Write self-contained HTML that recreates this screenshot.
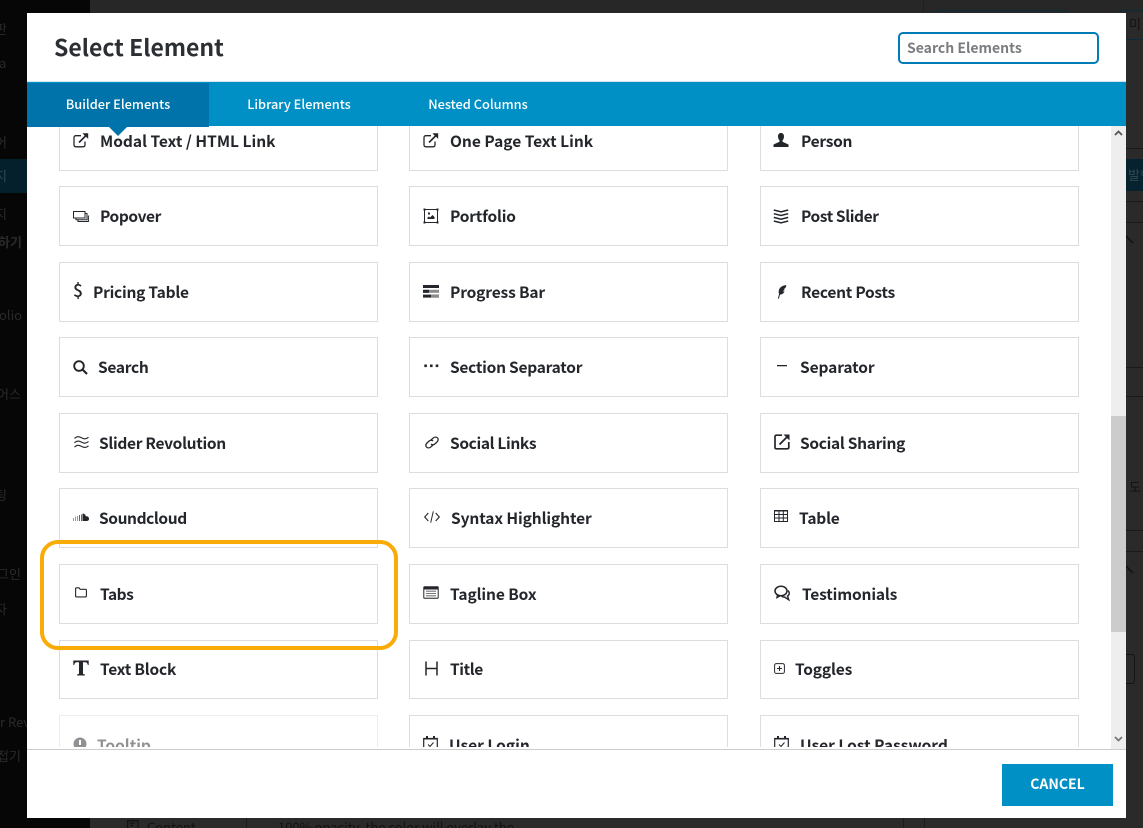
<!DOCTYPE html>
<html lang="en"><head><meta charset="utf-8"><title>Select Element</title>
<style>
*{box-sizing:border-box}
html,body{margin:0;padding:0;width:1143px;height:828px;overflow:hidden;background:#2a2a2a}
body{position:relative;font-family:"Noto Sans CJK KR","Liberation Sans",sans-serif;color:#23282d}
.a{position:absolute;white-space:nowrap}
.side{left:0;top:0;width:90px;height:828px;background:#060606}
.d{color:#2a2a2a;font-size:13px;line-height:18px}
.modal{left:27px;top:13px;width:1099px;height:805px;background:#fff}
.title{left:27px;top:15px;font-size:23px;line-height:36px;font-weight:700;color:#2b2f33}
.search{left:871px;top:19px;width:201px;height:32px;border:2px solid #007cb6;border-radius:5px;font-size:14px;font-weight:700;color:#7a7d80;line-height:29px;padding-left:7px}
.bar{left:0;top:68px;width:1099px;height:45px;background:#0190c6;border-top:1px solid #d5e6ee}
.tab{top:1px;height:44px;color:#fff;font-size:12.8px;line-height:41px;font-weight:500;text-align:center}
.list{left:0;top:113px;width:1084px;height:621px;overflow:hidden}
.c{position:absolute;width:319px;height:60px;border:1px solid #ddd;background:#fff}
.l{position:absolute;font-size:15.5px;font-weight:700;line-height:20px;color:#23262b;white-space:nowrap}
svg{position:absolute;overflow:visible;stroke-width:1.3}
.s{fill:none;stroke:#23262b}
.f{fill:#23262b}
.scroll{left:1084px;top:113px;width:15px;height:623px;background:#eee}
.thumb{left:0;top:290px;width:15px;height:216px;background:#ccc}
.foot{left:0;top:736px;width:1099px;height:69px;background:#fff;border-top:1px solid #ccc}
.btn{left:975px;top:14px;width:111px;height:42px;background:#0190c6;color:#fff;font-weight:700;font-size:14px;line-height:41px;text-align:center}
.ring{left:40px;top:540px;width:358px;height:110px;border:4px solid #f9ab07;border-radius:18px}
.ln{position:absolute;left:1126px;width:17px;height:1px;background:#1a1a1a}
</style></head><body>
<div class="a side"></div>
<div class="a" style="left:90px;top:0;width:1053px;height:13px;background:#272727"></div>
<div class="a" style="left:923px;top:0;width:1px;height:13px;background:#1f1f1f"></div>
<div class="a" style="left:934px;top:10px;width:133px;height:3px;border:1px solid #0b2a3a;border-bottom:0;border-radius:3px 3px 0 0"></div>
<div class="a" style="left:1118px;top:10px;width:25px;height:30px;border:1px solid #0b2a3a;border-right:0;border-radius:3px 0 0 3px"></div>
<div class="a" style="left:1126px;top:159px;width:17px;height:32px;background:#06222f"></div>
<div class="ln" style="top:148px"></div><div class="ln" style="top:201px"></div><div class="ln" style="top:222px"></div>
<div class="ln" style="top:367px"></div><div class="ln" style="top:396px"></div><div class="ln" style="top:530px"></div><div class="ln" style="top:551px"></div>
<svg style="left:1126px;top:236px" width="12" height="8" viewBox="0 0 12 8"><path fill="none" stroke="#111" stroke-width="1.500" d="M0 0 7 7"/></svg>
<svg style="left:1126px;top:566px" width="12" height="8" viewBox="0 0 12 8"><path fill="none" stroke="#111" stroke-width="1.500" d="M0 0 7 7"/></svg>
<div class="a" style="left:1126px;top:654px;width:9px;height:30px;border:1px solid #141414;border-left:0;border-radius:0 3px 3px 0"></div>
<div class="a" style="left:0;top:159px;width:27px;height:34px;background:#04202c"></div>
<div class="a d" style="left:-5px;top:20px">판</div>
<div class="a d" style="left:-1px;top:54px">a</div>
<div class="a d" style="left:-5px;top:133px">어</div>
<div class="a d" style="left:-5px;top:167px;color:#33474f">지</div>
<div class="a d" style="left:-5px;top:205px">지</div>
<div class="a d" style="left:-2px;top:233px;font-weight:700">하기</div>
<div class="a d" style="left:-1px;top:306px">olio</div>
<div class="a d" style="left:-3px;top:385px">어스</div>
<div class="a d" style="left:-5px;top:486px">팅</div>
<div class="a d" style="left:-3px;top:565px">그인</div>
<div class="a d" style="left:-5px;top:600px">자</div>
<div class="a d" style="left:0;top:713px">r Rev</div>
<div class="a d" style="left:-3px;top:747px">접기</div>
<div class="a d" style="left:1129px;top:15px;color:#111">미</div>
<div class="a d" style="left:1128px;top:166px;color:#33474f">발행</div>
<div class="a d" style="left:1129px;top:478px;color:#111">도</div>
<svg style="left:127px;top:820px" width="12" height="8" viewBox="0 0 12 8"><path fill="none" stroke="#111" stroke-width="1.200" d="M.6 8V.6H11V8M3 3H8M3 5.500H6"/></svg>
<div class="a d" style="left:147px;top:818px;color:#111;font-weight:400">Content</div>
<div class="a d" style="left:278px;top:818px;color:#111">100% opacity, the color will overlay the</div>
<div class="a" style="left:246px;top:818px;width:1px;height:10px;background:#1b1b1b"></div>
<div class="a" style="left:903px;top:818px;width:1px;height:10px;background:#1b1b1b"></div>
<div class="a" style="left:924px;top:818px;width:1px;height:10px;background:#1b1b1b"></div>

<div class="a modal">
 <div class="a title">Select Element</div>
 <div class="a search">Search Elements</div>

 <div class="a list">
  <!-- row 1 -->
  <div class="c" style="left:32px;top:-16px;height:61px"></div><div class="c" style="left:382px;top:-16px;height:61px"></div><div class="c" style="left:733px;top:-16px;height:61px"></div>
  <div class="l" style="left:73px;top:5px">Modal Text / HTML Link</div><div class="l" style="left:423px;top:5px">One Page Text Link</div><div class="l" style="left:774px;top:5px;letter-spacing:-.3px">Person</div>
  <svg style="left:46px;top:7px" width="16" height="15" viewBox="0 0 16 15"><path class="s" d="M8 2.700H3Q1 2.700 1 4.700V11.800Q1 13.800 3 13.800H10Q12 13.800 12 11.800V8.500"/><path class="s" stroke-width="1.600" d="M6 9.500 14 1.500"/><path class="f" d="M9.500.2H15.200V5.900L13.300 4 11 2Z"/></svg>
  <svg style="left:396px;top:7px" width="16" height="15" viewBox="0 0 16 15"><path class="s" d="M8 2.700H3Q1 2.700 1 4.700V11.800Q1 13.800 3 13.800H10Q12 13.800 12 11.800V8.500"/><path class="s" stroke-width="1.600" d="M6 9.500 14 1.500"/><path class="f" d="M9.500.2H15.200V5.900L13.300 4 11 2Z"/></svg>
  <svg style="left:746px;top:7px" width="16" height="14" viewBox="0 0 16 14"><path class="f" d="M5 3.500C5 1.300 6.200 0 8 0S11 1.300 11 3.500C11 5.500 10 6.800 9.500 7.500V8.800L15.500 11.500V14H.5V11.500L6.500 8.800V7.500C6 6.800 5 5.500 5 3.500Z"/></svg>
  <!-- row 2 -->
  <div class="c" style="left:32px;top:60px"></div><div class="c" style="left:382px;top:60px"></div><div class="c" style="left:733px;top:60px"></div>
  <div class="l" style="left:73px;top:80px;letter-spacing:-.4px">Popover</div><div class="l" style="left:423px;top:80px;letter-spacing:-.2px">Portfolio</div><div class="l" style="left:774px;top:80px;letter-spacing:-.4px">Post Slider</div>
  <svg style="left:46px;top:85px" width="16" height="12" viewBox="0 0 16 12"><rect class="s" x=".5" y=".5" width="11.500" height="6.500" stroke-width="1"/><path class="s" stroke="#444" stroke-width="1" d="M12.500 2.500H14V8.700H3V7.500M15.400 4.500V10.500H5V9"/></svg>
  <svg style="left:396px;top:82px" width="16" height="16" viewBox="0 0 16 16"><rect class="s" x="1.500" y="1.500" width="13" height="13" stroke-width="1"/><g class="f"><rect x=".5" y=".5" width="2" height="2"/><rect x="13.500" y=".5" width="2" height="2"/><rect x=".5" y="13.500" width="2" height="2"/><rect x="13.500" y="13.500" width="2" height="2"/><rect x="5" y="4.500" width="2" height="2"/><path d="M4.500 11V9.500L6 8.500 7 9.500 9.500 7 11.500 9V11Z"/></g></svg>
  <svg style="left:746px;top:83px" width="16" height="15" viewBox="0 0 16 15"><path class="s" stroke-width="1.500" d="M.8 1 8 2.800 15.200 1M.8 4.700 8 6.500 15.200 4.700M.8 8.400 8 10.200 15.200 8.400M.8 12 8 13.800 15.200 12"/></svg>
  <!-- row 3 -->
  <div class="c" style="left:32px;top:136px"></div><div class="c" style="left:382px;top:136px"></div><div class="c" style="left:733px;top:136px"></div>
  <div class="l" style="left:66px;top:156px;letter-spacing:-.25px">Pricing Table</div><div class="l" style="left:423px;top:156px;letter-spacing:-.15px">Progress Bar</div><div class="l" style="left:774px;top:156px;letter-spacing:-.25px">Recent Posts</div>
  <div class="l" style="left:46px;top:155px;font-size:17.500px;font-weight:500">$</div>
  <svg style="left:396px;top:159px" width="16" height="13" viewBox="0 0 16 13"><rect class="f" width="16" height="3"/><rect y="4.800" width="16" height="3" fill="#8b8b8b"/><rect y="4.800" width="6" height="3" fill="#23262b"/><rect y="9.600" width="16" height="3" class="f"/><rect x="8" y="9.600" width="8" height="3" fill="#8b8b8b"/></svg>
  <svg style="left:749px;top:159px" width="11" height="14" viewBox="0 0 12 16"><path class="f" d="M11.500 0C8 .5 4 2 3 6 2.500 8 3 9.500 3.200 10.500L1.800 15.500H3L4.300 11C7 11 9 9 9.500 7L7 7.500 10 5 8.500 5 11 2.500Z"/></svg>
  <!-- row 4 -->
  <div class="c" style="left:32px;top:211px"></div><div class="c" style="left:382px;top:211px"></div><div class="c" style="left:733px;top:211px"></div>
  <div class="l" style="left:71px;top:231px;letter-spacing:-.3px">Search</div><div class="l" style="left:423px;top:231px;letter-spacing:-.25px">Section Separator</div><div class="l" style="left:773px;top:231px;letter-spacing:-.1px">Separator</div>
  <svg style="left:46px;top:234px" width="15" height="15" viewBox="0 0 15 15"><circle class="s" cx="6" cy="6" r="4.800" stroke-width="1.900"/><path class="s" stroke-width="2.200" d="M9.500 9.500 14 14"/></svg>
  <svg style="left:397px;top:238px" width="15" height="4" viewBox="0 0 15 4"><g class="f"><rect x=".3" y=".5" width="2.600" height="2.600"/><rect x="6" y=".5" width="2.600" height="2.600"/><rect x="11.700" y=".5" width="2.600" height="2.600"/></g></svg>
  <svg style="left:750px;top:239px" width="10" height="2" viewBox="0 0 10 2"><rect class="f" width="10" height="1.300"/></svg>
  <!-- row 5 -->
  <div class="c" style="left:32px;top:287px"></div><div class="c" style="left:382px;top:287px"></div><div class="c" style="left:733px;top:287px"></div>
  <div class="l" style="left:72px;top:307px;letter-spacing:-.3px">Slider Revolution</div><div class="l" style="left:423px;top:307px;letter-spacing:-.35px">Social Links</div><div class="l" style="left:773px;top:307px;letter-spacing:-.3px">Social Sharing</div>
  <svg style="left:47px;top:310px" width="15" height="13" viewBox="0 0 15 13"><path class="s" stroke-width="1.100" d="M.5 2.500C3 0 5 .5 7.500 1.800S12 3.500 14.500 1.200M.5 6.800C3 4.300 5 4.800 7.500 6.100S12 7.800 14.500 5.500M.5 11.100C3 8.600 5 9.100 7.500 10.400S12 12.100 14.500 9.800"/></svg>
  <svg style="left:398px;top:310px" width="14" height="13" viewBox="0 0 14 13"><path class="s" d="M6 4 8 2.200C9.500.8 11.300.8 12.400 1.800S13.500 4.500 12 6L9.800 8C8.500 9 7 9 6 8"/><path class="s" d="M8 9 6 10.800C4.500 12.200 2.700 12.200 1.600 11.200S.5 8.500 2 7L4.200 5C5.500 4 7 4 8 5"/></svg>
  <svg style="left:747px;top:308px" width="16" height="16" viewBox="0 0 16 16"><path class="s" stroke-width="1.700" d="M8 1.200H2.500Q1 1.200 1 2.700V13.300Q1 14.800 2.500 14.800H13.300Q14.800 14.800 14.800 13.300V8"/><path class="s" stroke-width="1.800" d="M5.500 10.500 13.500 2.500"/><path class="f" d="M9.500.5H15.500V6.500L13.500 4.500 11.500 2.500Z"/></svg>
  <!-- row 6 -->
  <div class="c" style="left:32px;top:362px"></div><div class="c" style="left:382px;top:362px"></div><div class="c" style="left:733px;top:362px"></div>
  <div class="l" style="left:72px;top:382px;letter-spacing:-.4px">Soundcloud</div><div class="l" style="left:424px;top:382px;letter-spacing:-.1px">Syntax Highlighter</div><div class="l" style="left:772px;top:382px;letter-spacing:-.2px">Table</div>
  <svg style="left:46px;top:387px" width="16" height="9" viewBox="0 0 16 9"><path fill="#9a9a9a" d="M0 5H1V8H0ZM2 3.500H3V8H2ZM4 3H5V8H4Z"/><path fill="#666" d="M6 2H7V8H6ZM8 1.500H9V8H8Z"/><path class="f" d="M9.500 .7C11 .2 12.500 1.500 12.800 3.300 14.500 3 16 4 16 5.700S14.800 8 13.500 8H9.500Z"/></svg>
  <svg style="left:397px;top:385px" width="16" height="12" viewBox="0 0 16 12"><path class="s" stroke-width="1.100" d="M4.300 2 .7 6 4.300 10M11.700 2 15.300 6 11.700 10"/><path class="s" stroke-width="1" d="M9.300.3 6.700 11.700"/></svg>
  <svg style="left:747px;top:384px" width="14" height="12" viewBox="0 0 14 12"><rect class="f" width="14" height="1.500"/><path class="s" stroke-width="1" d="M.5.500H13.500V11.500H.5ZM.5 4.500H13.500M.5 8H13.500M5 .5V11.500M9.300.5V11.500"/></svg>
  <!-- row 7 -->
  <div class="c" style="left:32px;top:438px"></div><div class="c" style="left:382px;top:438px"></div><div class="c" style="left:733px;top:438px"></div>
  <div class="l" style="left:73px;top:458px;letter-spacing:-.5px">Tabs</div><div class="l" style="left:423px;top:458px;letter-spacing:-.1px">Tagline Box</div><div class="l" style="left:775px;top:458px;letter-spacing:-.15px">Testimonials</div>
  <svg style="left:48px;top:461px" width="12" height="11" viewBox="0 0 12 11"><path class="s" stroke-width="1.100" d="M.6 9V1.700Q.6.800 1.500.800H4L5.200 2.300H10.500Q11.400 2.300 11.400 3.200V9Q11.400 9.900 10.500 9.900H1.500Q.6 9.900.6 9Z"/></svg>
  <svg style="left:396px;top:460px" width="16" height="13" viewBox="0 0 16 13"><rect class="f" x=".3" y=".3" width="15.400" height="12.400" rx="1"/><rect x="1.300" y="3.500" width="13.400" height="8.200" fill="#fff"/><path stroke="#777" stroke-width="1.100" d="M3 5.200H13M3 7.500H13M3 9.800H13"/></svg>
  <svg style="left:747px;top:459px" width="17" height="16" viewBox="0 0 17 16"><ellipse class="s" cx="7" cy="6" rx="6" ry="4.800" stroke-width="1.500"/><path class="s" stroke-width="1.400" d="M3.500 10 3 12.500 6 10.900M13.800 5.500C15.800 7 15.800 9.800 13.500 11L14.800 14.800 10.500 12C9 12.100 8 11.600 7.500 11"/></svg>
  <!-- row 8 -->
  <div class="c" style="left:32px;top:514px;height:59px"></div><div class="c" style="left:382px;top:514px;height:59px"></div><div class="c" style="left:733px;top:514px;height:59px"></div>
  <div class="l" style="left:73px;top:533px;letter-spacing:-.2px">Text Block</div><div class="l" style="left:423px;top:533px;letter-spacing:-.4px">Title</div><div class="l" style="left:768px;top:533px;letter-spacing:-.15px">Toggles</div>
  <svg style="left:46px;top:534px" width="16" height="16" viewBox="0 0 16 16"><path class="f" d="M.3.500H15.700V5H14.800C14.500 3 13.500 2.200 12 2.200H10V13C10 14 10.300 14.300 11.800 14.300V15.500H4.200V14.300C5.700 14.300 6 14 6 13V2.200H4C2.500 2.200 1.500 3 1.200 5H.3Z"/></svg>
  <svg style="left:398px;top:535px" width="13" height="15" viewBox="0 0 13 15"><path class="s" stroke-width="1.500" d="M1 .5V14.500M12 .5V14.500M1 7.500H12"/></svg>
  <svg style="left:747px;top:537px" width="11" height="11" viewBox="0 0 11 11"><rect class="s" x=".6" y=".6" width="9.800" height="9.800" rx="1.800" stroke-width="1"/><path class="s" stroke-width="1.100" d="M3 5.500H8M5.500 3V8"/></svg>
  <!-- row 9 -->
  <div class="c" style="left:32px;top:589px;opacity:.5"></div><div class="c" style="left:382px;top:589px"></div><div class="c" style="left:733px;top:589px"></div>
  <div class="l" style="left:70px;top:609px;opacity:.5">Tooltip</div><div class="l" style="left:422px;top:609px">User Login</div><div class="l" style="left:773px;top:609px">User Lost Password</div>
  <svg style="left:46px;top:611px;opacity:.5" width="14" height="14" viewBox="0 0 14 14"><circle class="f" cx="7" cy="7" r="6.500"/><rect x="6" y="3" width="2" height="5" fill="#fff"/></svg>
  <svg style="left:396px;top:610px" width="15" height="15" viewBox="0 0 15 15"><rect class="s" x=".7" y="2.500" width="13.600" height="12" stroke-width="1.200"/><rect class="f" x=".7" y="2" width="13.600" height="1.500"/><rect class="f" x="3" y="0" width="2" height="3"/><rect class="f" x="10" y="0" width="2" height="3"/><path class="s" stroke-width="1" d="M5 8.500 7 10.500 10.500 6.500"/></svg>
  <svg style="left:747px;top:610px" width="15" height="15" viewBox="0 0 15 15"><rect class="s" x=".7" y="2.500" width="13.600" height="12" stroke-width="1.200"/><rect class="f" x=".7" y="2" width="13.600" height="1.500"/><rect class="f" x="3" y="0" width="2" height="3"/><rect class="f" x="10" y="0" width="2" height="3"/><path class="s" stroke-width="1" d="M5 8.500 7 10.500 10.500 6.500"/></svg>
 </div>

 <div class="a bar">
  <div class="a tab" style="left:0;width:182px;background:#0073aa">Builder Elements</div>
  <div class="a tab" style="left:182px;width:180px">Library Elements</div>
  <div class="a tab" style="left:361px;width:180px">Nested Columns</div>
 </div>
 <svg style="left:81px;top:113px" width="20" height="10" viewBox="0 0 20 10"><path fill="#0073aa" d="M0 0H20L10 10Z"/></svg>

 <div class="a scroll">
  <div class="a thumb"></div>
  <svg style="left:3px;top:4px" width="9" height="6" viewBox="0 0 9 6"><path fill="none" stroke="#555" stroke-width="1.800" d="M1 5 4.500 1.500 8 5"/></svg>
  <svg style="left:3px;top:610px" width="9" height="6" viewBox="0 0 9 6"><path fill="none" stroke="#777" stroke-width="1.800" d="M1 1 4.500 4.500 8 1"/></svg>
 </div>

 <div class="a foot"><div class="a btn">CANCEL</div></div>
</div>
<div class="a ring"></div>
</body></html>
